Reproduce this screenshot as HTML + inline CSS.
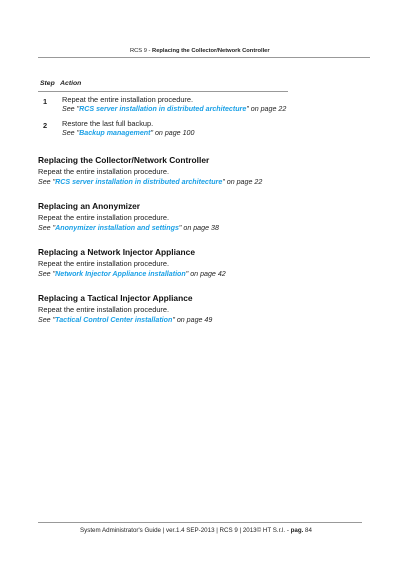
<!DOCTYPE html>
<html><head><style>
body{margin:0;width:400px;height:566px;background:#fff;position:relative;font-family:"Liberation Sans",sans-serif;color:#222;overflow:hidden}
.a{position:absolute;white-space:nowrap}
.t{font-size:7.4px}
.s{font-size:7.1px}
.l{color:#1aa0e6;font-weight:bold}
.h{font-size:8.4px;font-weight:bold;color:#111}
i{font-style:italic}
</style></head><body>
<div class="a" style="left:130px;top:48px;font-size:5.75px">RCS 9 - <b>Replacing the Collector/Network Controller</b></div>
<div class="a" style="left:38px;top:57px;width:332px;height:1px;background:#999"></div>
<div class="a t" style="left:40px;top:80px;font-weight:bold;font-style:italic;font-size:6.8px">Step&nbsp;&nbsp; Action</div>
<div class="a" style="left:38px;top:91px;width:250px;height:1px;background:#999"></div>
<div class="a t" style="left:43px;top:97px;font-weight:bold">1</div>
<div class="a t" style="left:62px;top:95px">Repeat the entire installation procedure.</div>
<div class="a s" style="left:62px;top:105px"><i>See "<span class="l">RCS server installation in distributed architecture</span>" on page 22</i></div>
<div class="a t" style="left:43px;top:121px;font-weight:bold">2</div>
<div class="a t" style="left:62px;top:119px">Restore the last full backup.</div>
<div class="a s" style="left:62px;top:129px"><i>See "<span class="l">Backup management</span>" on page 100</i></div>

<div class="a h" style="left:38px;top:155px">Replacing the Collector/Network Controller</div>
<div class="a t" style="left:38px;top:167px">Repeat the entire installation procedure.</div>
<div class="a s" style="left:38px;top:178px"><i>See "<span class="l">RCS server installation in distributed architecture</span>" on page 22</i></div>

<div class="a h" style="left:38px;top:201px">Replacing an Anonymizer</div>
<div class="a t" style="left:38px;top:213px">Repeat the entire installation procedure.</div>
<div class="a s" style="left:38px;top:224px"><i>See "<span class="l">Anonymizer installation and settings</span>" on page 38</i></div>

<div class="a h" style="left:38px;top:247px">Replacing a Network Injector Appliance</div>
<div class="a t" style="left:38px;top:259px">Repeat the entire installation procedure.</div>
<div class="a s" style="left:38px;top:270px"><i>See "<span class="l">Network Injector Appliance installation</span>" on page 42</i></div>

<div class="a h" style="left:38px;top:293px">Replacing a Tactical Injector Appliance</div>
<div class="a t" style="left:38px;top:305px">Repeat the entire installation procedure.</div>
<div class="a s" style="left:38px;top:316px"><i>See "<span class="l">Tactical Control Center installation</span>" on page 49</i></div>

<div class="a" style="left:38px;top:522px;width:324px;height:1px;background:#999"></div>
<div class="a" style="left:80px;top:527px;font-size:6.2px">System Administrator's Guide | ver.1.4 SEP-2013 | RCS 9 | 2013© HT S.r.l. - <b>pag.</b> 84</div>
</body></html>
